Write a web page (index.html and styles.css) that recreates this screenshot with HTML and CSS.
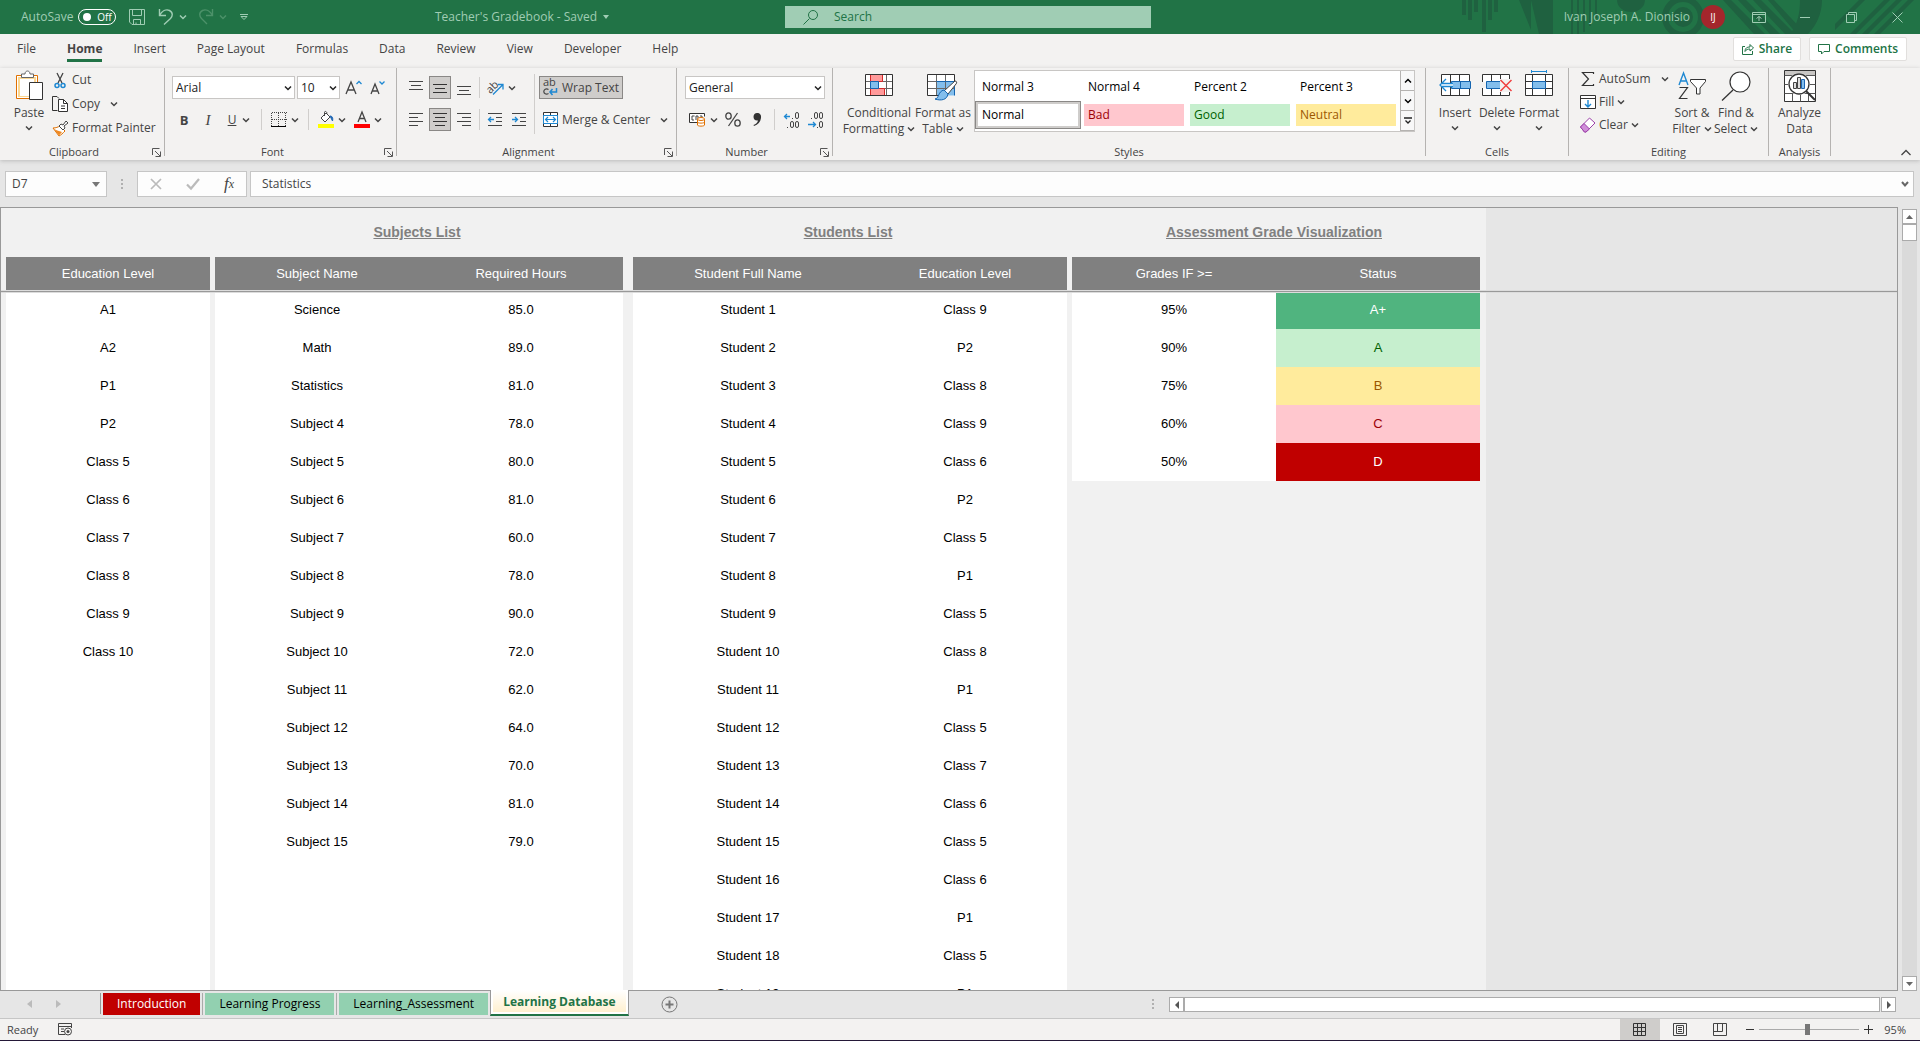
FILE: index.html
```html
<!DOCTYPE html>
<html lang="en">
<head>
  <meta charset="UTF-8">
  <meta name="viewport" content="width=device-width, initial-scale=1.0">
  <title>Teacher's Gradebook</title>
  <link rel="stylesheet" href="styles.css">
</head>
<body>
  <!-- shared icons -->
  <svg class="sprite" aria-hidden="true">
    <symbol id="chev" viewBox="0 0 8 8"><path d="M1 2.5 4 5.5 7 2.5" fill="none" stroke="currentColor" stroke-width="1.5"/></symbol>
    <symbol id="chev-up" viewBox="0 0 8 8"><path d="M1 5.5 4 2.5 7 5.5" fill="none" stroke="currentColor" stroke-width="1.5"/></symbol>
    <symbol id="launcher" viewBox="0 0 9 9"><path d="M.5 7V.5H7.500M3 3 8 8M8.500 3.500V8.500H3.500" fill="none" stroke="#555"/></symbol>
  </svg>

  <header class="titlebar">
    <svg class="deco" viewBox="0 0 460 34" aria-hidden="true">
      <g fill="#1f6140">
        <path d="M2 0h4v15H2zM8 0h4v20H8zM14 0h4v12h-4zM22 0h4v32h-4zM28 0h4v20h-4zM34 0h4v12h-4zM59 0h12v30L59 0zM71 0h22v34H79zM111 0h2v34h-2zM117 0h2v34h-2zM123 0h2v32h-2zM129 0h2v26h-2zM135 0h2v18h-2z"/>
        <path d="M157 0h28a14 12 0 0 1-28 0z"/>
        <path d="M263 0h8l34 34h-11zM278 0h8l34 34h-10zM293 0h8l34 34h-10zM308 0h6l32 34h-9zM340 0h22c0 14-6 26-14 34h-18c8-10 10-22 10-34zM390 34l34-34h6l-34 34zM402 34l34-34h6l-34 34zM414 34l34-34h6l-34 34zM375 24l24-24h6l-30 30z"/>
      </g>
      <g fill="none" stroke="#1f6140" stroke-width="6"><circle cx="223" cy="17" r="18"/><circle cx="223" cy="17" r="7"/></g>
    </svg>
    <div class="quick">
      <span>AutoSave</span>
      <button class="autosave" role="switch" aria-checked="false" aria-label="AutoSave"><i></i>Off</button>
      <button class="tb save" aria-label="Save"><svg width="16" height="16" viewBox="0 0 16 16"><path d="M.5.5h15v15H3L.5 13zM3.500.5v6h9v-6M4.500 15.500v-5h7v5M7 15.500v-2" fill="none" stroke="currentColor"/></svg></button>
      <button class="tb" aria-label="Undo"><svg width="16" height="18" viewBox="0 0 16 18"><path d="M1.500 1v6.500H8M1.500 7.500C4 3 8 1 11.500 2.500c4 2 3 6 1 8L6 16.500" fill="none" stroke="currentColor" stroke-width="1.400"/></svg></button>
      <button class="tb arrow" aria-label="Undo list"><svg width="8" height="8"><use href="#chev"/></svg></button>
      <button class="tb dim" aria-label="Redo"><svg width="16" height="18" viewBox="0 0 16 18"><path d="M14.500 1v6.500H8M14.500 7.500C12 3 8 1 4.500 2.500c-4 2-3 6-1 8L9 16" fill="none" stroke="currentColor" stroke-width="1.400"/></svg></button>
      <button class="tb arrow dim" aria-label="Redo list"><svg width="8" height="8"><use href="#chev"/></svg></button>
      <button class="tb custom" aria-label="Customize toolbar"><svg width="8" height="8" viewBox="0 0 8 8"><path d="M0 1.500h8M1 3.500l3 3 3-3z" fill="none" stroke="currentColor"/></svg></button>
    </div>
    <button class="docname">Teacher's Gradebook - Saved <svg width="6" height="4" viewBox="0 0 6 4"><path d="M0 0h6L3 4z" fill="currentColor"/></svg></button>
    <label class="search">
      <svg width="16" height="16" viewBox="0 0 16 16"><circle cx="10" cy="6" r="4.500" fill="none" stroke="#217346"/><path d="M6.500 9.500.5 15.500" stroke="#217346"/></svg>
      <input type="text" placeholder="Search" aria-label="Search">
    </label>
    <div class="account">
      <span>Ivan Joseph A. Dionisio</span>
      <button class="avatar">IJ</button>
      <button class="win" aria-label="Ribbon display options"><svg width="14" height="11" viewBox="0 0 14 11"><path d="M.5.5h13v10H.5zM.5 2.500h13M7 9V4.500M4.500 6.500 7 4.500l2.500 2" fill="none" stroke="currentColor"/></svg></button>
      <button class="win" aria-label="Minimize"><svg width="10" height="11"><path d="M0 5.500h10" stroke="currentColor"/></svg></button>
      <button class="win" aria-label="Restore"><svg width="11" height="11" viewBox="0 0 11 11"><path d="M.5 2.500h8v8h-8zM2.500 2.500v-2h8v8h-2" fill="none" stroke="currentColor"/></svg></button>
      <button class="win" aria-label="Close"><svg width="11" height="11" viewBox="0 0 11 11"><path d="M.5.5l10 10M10.500.5l-10 10" stroke="currentColor"/></svg></button>
    </div>
  </header>

  <nav class="tabs">
    <a href="#file">File</a>
    <a href="#home" class="active">Home</a>
    <a href="#insert">Insert</a>
    <a href="#layout">Page Layout</a>
    <a href="#formulas">Formulas</a>
    <a href="#data">Data</a>
    <a href="#review">Review</a>
    <a href="#view">View</a>
    <a href="#developer">Developer</a>
    <a href="#help">Help</a>
    <div class="share">
      <button><svg width="12" height="12" viewBox="0 0 12 12"><path d="M3 3.500H.5v8h10V8M3 8.500C3 5 5 4 8 4V1.500L11.500 5 8 8V6C6 6 4 6.500 3 8.500z" fill="none" stroke="currentColor"/></svg>Share</button>
      <button><svg width="12" height="12" viewBox="0 0 12 12"><path d="M.5 1.500h11v7H6L3.500 11V8.500h-3z" fill="none" stroke="currentColor"/></svg>Comments</button>
    </div>
  </nav>

  <div class="ribbon">
    <section class="group clipboard">
      <div class="tools">
        <button class="big">
          <svg width="30" height="32" viewBox="0 0 30 32"><path d="M2.500 5.500h21v23h-21z" fill="#fff" stroke="#e07000"/><path d="M4 7h18v20H4z" fill="#fbd894"/><path d="M6 9h14v17H6z" fill="#fff"/><path d="M7.500 7.500V4H11c0-4 5-4 5 0h3.500v3.500z" fill="#fff" stroke="#666"/><path d="M15.500 12.500h13v17h-13z" fill="#fff" stroke="#333"/></svg>
          <span>Paste</span><svg class="c" width="8" height="8"><use href="#chev"/></svg>
        </button>
        <div class="stack">
          <button><svg width="17" height="17" viewBox="0 0 17 17"><path d="M5 1l5 10M11 1 6 11" stroke="#444" stroke-width="1.300"/><circle cx="5" cy="13.500" r="2" fill="none" stroke="#1e88d2" stroke-width="1.500"/><circle cx="11" cy="13.500" r="2" fill="none" stroke="#1e88d2" stroke-width="1.500"/></svg>Cut</button>
          <button><svg width="17" height="17" viewBox="0 0 17 17"><path d="M5.500 14.500h-5V.5h4.500l2 2" fill="none" stroke="#333"/><path d="M6.500 3.500h5l4 4v8h-9z" fill="#fff" stroke="#333"/><path d="M11.500 3.500v4h4M9 10h4M9 12.500h4" fill="none" stroke="#333"/></svg>Copy<svg class="c gap" width="8" height="8"><use href="#chev"/></svg></button>
          <button><svg width="17" height="17" viewBox="0 0 17 17"><path d="M1 8c3 0 5-1 7-2l5 5c-2 2-4 4-6 5z" fill="#fff" stroke="#e07000"/><path d="M2 9c4 2 6 2 8 3l-3 3.500z" fill="#f08a24"/><path d="M7 6l2-2 2 1 3-4 2 2-4 3 1 2-2 2z" fill="#fff" stroke="#444"/></svg>Format Painter</button>
        </div>
      </div>
      <footer>Clipboard<button aria-label="Clipboard options"><svg width="9" height="9"><use href="#launcher"/></svg></button></footer>
    </section>

    <section class="group font">
      <div class="tools rows">
        <div class="row">
          <select class="face" aria-label="Font"><option>Arial</option></select>
          <select class="size" aria-label="Font size"><option>10</option></select>
          <button class="ic" aria-label="Increase font size"><svg width="18" height="16" viewBox="0 0 18 16"><path d="M1 14 6 2l5 12M3 10h6" fill="none" stroke="#444" stroke-width="1.300"/><path d="M11.500 4 14 1.500 16.500 4" fill="none" stroke="#1e88d2" stroke-width="1.300"/></svg></button>
          <button class="ic" aria-label="Decrease font size"><svg width="16" height="16" viewBox="0 0 16 16"><path d="M1 14 5 4l4 10M2.500 11h5" fill="none" stroke="#444" stroke-width="1.300"/><path d="M9.500 1.500 12 4l2.500-2.500" fill="none" stroke="#1e88d2" stroke-width="1.300"/></svg></button>
        </div>
        <div class="row">
          <button class="ic b">B</button><button class="ic i">I</button>
          <button class="ic dd"><span class="u">U</span><svg class="c" width="8" height="8"><use href="#chev"/></svg></button>
          <span class="sep"></span>
          <button class="ic dd" aria-label="Borders"><svg width="16" height="16" viewBox="0 0 16 16"><path d="M1 .5h15M1 7.500h15M.5 1v14M7.500 1v14M14.500 1v14" stroke="#444" stroke-dasharray="1 1"/><path d="M0 14.500h15" stroke="#000"/></svg><svg class="c" width="8" height="8"><use href="#chev"/></svg></button>
          <span class="sep"></span>
          <button class="ic dd" aria-label="Fill color"><svg width="16" height="17" viewBox="0 0 16 17"><path d="M8 2 3 7l4 4 5-5zM6.500 5V1.500c0-2 2.500-1 2.500 1" fill="#fff" stroke="#444"/><path d="M12 5c3 0 3 3 2.500 5L13 7z" fill="#1e66b4" stroke="#1e66b4"/><path d="M0 13h16v4H0z" fill="#ff0"/></svg><svg class="c" width="8" height="8"><use href="#chev"/></svg></button>
          <button class="ic dd" aria-label="Font color"><svg width="16" height="17" viewBox="0 0 16 17"><path d="M4 11 8 1l4 10M5.500 7.500h5" fill="none" stroke="#444" stroke-width="1.300"/><path d="M0 13h16v4H0z" fill="#f00"/></svg><svg class="c" width="8" height="8"><use href="#chev"/></svg></button>
        </div>
      </div>
      <footer>Font<button aria-label="Font options"><svg width="9" height="9"><use href="#launcher"/></svg></button></footer>
    </section>

    <section class="group alignment">
      <div class="tools">
        <div class="rows">
          <div class="row">
            <button class="ic" aria-label="Top align"><svg width="14" height="14" viewBox="0 0 14 14"><path d="M0 .5h14M2 4.500h10M0 8.500h14" stroke="#444"/></svg></button>
            <button class="ic on" aria-label="Middle align"><svg width="14" height="14" viewBox="0 0 14 14"><path d="M0 3.500h14M2 7.500h10M0 11.500h14" stroke="#333"/></svg></button>
            <button class="ic" aria-label="Bottom align"><svg width="14" height="14" viewBox="0 0 14 14"><path d="M0 5.500h14M2 9.500h10M0 13.500h14" stroke="#444"/></svg></button>
            <span class="sep"></span>
            <button class="ic dd" aria-label="Orientation"><svg width="17" height="17" viewBox="0 0 17 17"><text x="-1" y="13" font-size="11" fill="#444" transform="rotate(-45 4 9)">ab</text><path d="M6 15.500 15.500 6M11 5.500h5v5" fill="none" stroke="#1e88d2" stroke-width="1.300"/></svg><svg class="c" width="8" height="8"><use href="#chev"/></svg></button>
          </div>
          <div class="row">
            <button class="ic" aria-label="Align left"><svg width="14" height="14" viewBox="0 0 14 14"><path d="M0 .5h14M0 4.500h9M0 8.500h14M0 12.500h9" stroke="#444"/></svg></button>
            <button class="ic on" aria-label="Center"><svg width="14" height="14" viewBox="0 0 14 14"><path d="M0 .5h14M2 4.500h10M0 8.500h14M2 12.500h10" stroke="#333"/></svg></button>
            <button class="ic" aria-label="Align right"><svg width="14" height="14" viewBox="0 0 14 14"><path d="M0 .5h14M5 4.500h9M0 8.500h14M5 12.500h9" stroke="#444"/></svg></button>
            <span class="sep"></span>
            <button class="ic" aria-label="Decrease indent"><svg width="14" height="14" viewBox="0 0 14 14"><path d="M0 .5h14M8 4.500h6M8 8.500h6M0 12.500h14" stroke="#444"/><path d="M6 6.500H.5M3 4 .5 6.500 3 9" fill="none" stroke="#1e88d2" stroke-width="1.300"/></svg></button>
            <button class="ic" aria-label="Increase indent"><svg width="14" height="14" viewBox="0 0 14 14"><path d="M0 .5h14M8 4.500h6M8 8.500h6M0 12.500h14" stroke="#444"/><path d="M0 6.500h5.500M3 4l2.500 2.500L3 9" fill="none" stroke="#1e88d2" stroke-width="1.300"/></svg></button>
          </div>
        </div>
        <span class="sep tall"></span>
        <div class="rows">
          <div class="row"><button class="txt on"><svg width="16" height="17" viewBox="0 0 16 17"><text x="0" y="7" font-size="11" fill="#444">ab</text><path d="M5.500 10.500C3 9 .8 10.500.8 12.500S3 16 5.500 14.500" fill="none" stroke="#444" stroke-width="1.200"/><path d="M13.500 9v4H7M9.500 10 7 13l2.500 3" fill="none" stroke="#1e88d2" stroke-width="1.500"/></svg>Wrap Text</button></div>
          <div class="row"><button class="txt"><svg width="16" height="16" viewBox="0 0 16 16"><path d="M.5.5h14v14H.5zM.5 3.500h14M.5 11.500h14M7.500.5v3M7.500 11.500v3" fill="#fff" stroke="#333"/><path d="M.5 3.500h14v8H.5z" fill="#fff" stroke="#1e88d2"/><path d="M2.500 7.500h10M5 5 2.500 7.500 5 10M10 5l2.500 2.500L10 10" fill="none" stroke="#1e88d2" stroke-width="1.200"/></svg>Merge &amp; Center<svg class="c gap" width="8" height="8"><use href="#chev"/></svg></button></div>
        </div>
      </div>
      <footer>Alignment<button aria-label="Alignment options"><svg width="9" height="9"><use href="#launcher"/></svg></button></footer>
    </section>

    <section class="group number">
      <div class="tools rows">
        <div class="row"><select class="format" aria-label="Number format"><option>General</option></select></div>
        <div class="row">
          <button class="ic dd" aria-label="Accounting format"><svg width="17" height="15" viewBox="0 0 17 15"><path d="M8 10.500H.5v-9h15v3" fill="#fff" stroke="#333"/><path d="M5.500 4H3v4h2M9 8V4H7v4M11 4h2v2" fill="none" stroke="#444"/><path d="M8.500 7v6c0 1.500 7 1.500 7 0V7" fill="#fff" stroke="#e07000"/><ellipse cx="12" cy="7" rx="3.500" ry="1.500" fill="#fff" stroke="#e07000"/><path d="M8.500 10c0 1.500 7 1.500 7 0" fill="none" stroke="#e07000"/></svg><svg class="c" width="8" height="8"><use href="#chev"/></svg></button>
          <button class="ic" aria-label="Percent"><svg width="16" height="15" viewBox="0 0 16 15"><path d="M12.500 1 3.500 14" stroke="#444" stroke-width="1.300"/><ellipse cx="3.500" cy="4" rx="2.700" ry="3.200" fill="none" stroke="#444" stroke-width="1.300"/><ellipse cx="12.500" cy="11" rx="2.700" ry="3.200" fill="none" stroke="#444" stroke-width="1.300"/></svg></button>
          <button class="ic" aria-label="Comma style"><svg width="9" height="13" viewBox="0 0 9 13"><path d="M4 0c3 0 4.500 2 4 5-.5 4-3 6.500-7 8l-.5-1c2.500-1 4-2.500 4.500-4.500C2 8 .5 6 .5 3.800.5 1.500 2 0 4 0z" fill="#333"/></svg></button>
          <span class="sep"></span>
          <button class="ic" aria-label="Increase decimal"><svg width="16" height="16" viewBox="0 0 16 16"><path d="M6 4.500H.5M3 2 .5 4.500 3 7" fill="none" stroke="#1e88d2" stroke-width="1.300"/><g fill="none" stroke="#444"><rect x="11.500" y=".5" width="3" height="6" rx="1.500"/><rect x="6.500" y="9.500" width="3" height="6" rx="1.500"/><rect x="11.500" y="9.500" width="3" height="6" rx="1.500"/></g><path d="M8 6h1v1H8zM3 15h1v1H3z" fill="#444"/></svg></button>
          <button class="ic" aria-label="Decrease decimal"><svg width="16" height="16" viewBox="0 0 16 16"><path d="M0 12.500h7.500M5 10l2.500 2.500L5 15" fill="none" stroke="#1e88d2" stroke-width="1.300"/><g fill="none" stroke="#444"><rect x="6.500" y=".5" width="3" height="6" rx="1.500"/><rect x="11.500" y=".5" width="3" height="6" rx="1.500"/><rect x="11.500" y="9.500" width="3" height="6" rx="1.500"/></g><path d="M3 6h1v1H3zM9 15h1v1H9z" fill="#444"/></svg></button>
        </div>
      </div>
      <footer>Number<button aria-label="Number options"><svg width="9" height="9"><use href="#launcher"/></svg></button></footer>
    </section>

    <section class="group styles">
      <div class="tools">
        <button class="big cond">
          <svg width="28" height="32" viewBox="0 0 28 32"><g transform="translate(0 4)"><path d="M.5.5h27v21H.5z" fill="#fff"/><path d="M.5 7.500h27M.5 14.500h27M5.500.5v21M21.500.5v21" stroke="#666"/><path d="M5.500.5h12v7h-12zM5.500 14.500h14v7h-14z" fill="#ff9a9a" stroke="#d42a2a"/><path d="M5.500 7.500h8v7h-8z" fill="#83beec" stroke="#1565b0"/><path d="M.5.5h27v21H.5z" fill="none" stroke="#333"/></g></svg>
          <span>Conditional<br>Formatting <svg class="c" width="8" height="8"><use href="#chev"/></svg></span>
        </button>
        <button class="big table">
          <svg width="32" height="32" viewBox="0 0 32 32"><g transform="translate(0 4)"><path d="M.5.5h27v21H.5z" fill="#fff"/><path d="M9.500 7.500h18v14h-18z" fill="#83beec"/><path d="M.5 7.500h27M.5 14.500h27M9.500.5v21M18.500.5v21" stroke="#666"/><path d="M27.500 12V.5H.5v21H12" fill="none" stroke="#333"/><path d="M9.500 7.500h18v14" fill="none" stroke="#1565b0"/><path d="M28 7c2 0 2 2 1 3l-8 10-4-3z" fill="#fff" stroke="#444"/><path d="M17 16l4 4c-1 6-7 7-13 5 4 0 3-8 9-9z" fill="#83beec" stroke="#1565b0"/></g></svg>
          <span>Format as<br>Table <svg class="c" width="8" height="8"><use href="#chev"/></svg></span>
        </button>
        <div class="gallery">
          <div class="swatches">
            <button>Normal 3</button><button>Normal 4</button><button>Percent 2</button><button>Percent 3</button>
            <button class="picked">Normal</button><button class="bad">Bad</button><button class="good">Good</button><button class="neutral">Neutral</button>
          </div>
          <div class="scroller">
            <button aria-label="Previous styles"><svg width="8" height="8"><use href="#chev-up"/></svg></button>
            <button aria-label="Next styles"><svg width="8" height="8"><use href="#chev"/></svg></button>
            <button aria-label="More styles"><svg width="8" height="8" viewBox="0 0 8 8"><path d="M0 1h8M1.500 3.500 4 6l2.500-2.500" fill="none" stroke="#222" stroke-width="1.300"/></svg></button>
          </div>
        </div>
      </div>
      <footer>Styles</footer>
    </section>

    <section class="group cells">
      <div class="tools">
        <button class="big"><svg width="32" height="32" viewBox="0 0 32 32"><g transform="translate(0 4)"><path d="M2.500.5h28v21h-28zM11.500.5v21M20.500.5v21" fill="#fff" stroke="#333"/><path d="M12.500 7.500h19v7h-19z" fill="#83beec" stroke="#1565b0"/><path d="M21.500 7.500v7" stroke="#1565b0"/><path d="M.5 11 7 5v4h7v4H7v4z" fill="#fff"/><path d="M14 9.500H3M14 12.500H3M7 5 1 11l6 6" fill="none" stroke="#1e88d2" stroke-width="1.300"/></g></svg><span>Insert</span><svg class="c" width="8" height="8"><use href="#chev"/></svg></button>
        <button class="big"><svg width="30" height="32" viewBox="0 0 30 32"><g transform="translate(0 4)"><path d="M.5.5h27v21H.5zM9.500.5v21M18.500.5v21" fill="#fff" stroke="#333"/><path d="M0 8h5v6H0z" fill="#f3f2f1"/><path d="M4.500 7.500h14l3 3.500-3 3.500h-14z" fill="#83beec" stroke="#1565b0"/><path d="M18 5h12v13H18z" fill="#f3f2f1"/><path d="M18.500 6l11 11M29.500 6l-11 11" stroke="#f04040" stroke-width="1.500"/></g></svg><span>Delete</span><svg class="c" width="8" height="8"><use href="#chev"/></svg></button>
        <button class="big"><svg width="28" height="32" viewBox="0 0 28 32"><g transform="translate(0 4)"><path d="M.5.5h27v21H.5zM.5 7.500h27M.5 14.500h27M7.500.5v21M20.500.5v21" fill="#fff" stroke="#333"/><path d="M7.500 7.500h13v7h-13z" fill="#83beec" stroke="#1565b0"/><path d="M6.500-4v3M21.500-4v3M6.500-2.500h15" stroke="#1e88d2"/></g></svg><span>Format</span><svg class="c" width="8" height="8"><use href="#chev"/></svg></button>
      </div>
      <footer>Cells</footer>
    </section>

    <section class="group editing">
      <div class="tools">
        <div class="stack">
          <button><svg width="16" height="16" viewBox="0 0 16 16"><path d="M13.500 3V1.500H2.500L8.500 8l-6 6.500h11V13" fill="none" stroke="#333" stroke-width="1.200"/></svg>AutoSum<svg class="c gap" width="8" height="8"><use href="#chev"/></svg></button>
          <button><svg width="16" height="15" viewBox="0 0 16 15"><path d="M.5.5h15v13H.5zM.5 3.500h15" fill="#fff" stroke="#333"/><path d="M8 5v7M5 9l3 3 3-3" fill="none" stroke="#1e88d2" stroke-width="1.400"/></svg>Fill<svg class="c" width="8" height="8"><use href="#chev"/></svg></button>
          <button><svg width="16" height="16" viewBox="0 0 16 16"><path d="M.5 10 9.500 1l5.500 5-9 9H4.500z" fill="#fff" stroke="#9b3fa8"/><path d="M.5 10 4 6.500l5.500 5.500L6 15H4.500z" fill="#cf8ed8" stroke="#9b3fa8"/></svg>Clear<svg class="c" width="8" height="8"><use href="#chev"/></svg></button>
        </div>
        <button class="big"><svg width="30" height="32" viewBox="0 0 30 32"><path d="M2 15 6.500 3 11 15M3.500 11h6" fill="none" stroke="#1e88d2" stroke-width="1.400"/><path d="M2.500 17.500h8l-8 11h8" fill="none" stroke="#333" stroke-width="1.200"/><path d="M13.500 9.500h15v2L23 18v6h-3.500v-6l-6-6.500z" fill="#fff" stroke="#333"/></svg><span>Sort &amp;<br>Filter <svg class="c" width="8" height="8"><use href="#chev"/></svg></span></button>
        <button class="big"><svg width="32" height="32" viewBox="0 0 32 32"><circle cx="20" cy="12" r="10" fill="#fff" stroke="#333" stroke-width="1.200"/><path d="M13 20 2 30.500" stroke="#333" stroke-width="1.300"/></svg><span>Find &amp;<br>Select <svg class="c" width="8" height="8"><use href="#chev"/></svg></span></button>
      </div>
      <footer>Editing</footer>
    </section>

    <section class="group analysis">
      <div class="tools">
        <button class="big"><svg width="32" height="32" viewBox="0 0 32 32"><path d="M.5.5h31v31H.5z" fill="#fff" stroke="#333"/><path d="M1 1h30v4H1z" fill="#c8c6c4"/><path d="M.5 5.500h31M.5 14.500h31M.5 23.500h31M8.500 23.500v8M16.500 23.500v8M24.500 23.500v8" stroke="#555"/><circle cx="15" cy="14" r="11" fill="#fff"/><circle cx="15" cy="14" r="10" fill="#fff" stroke="#333" stroke-width="1.300"/><path d="M9.500 12.500h3v6h-3zM13.500 7.500h3v11h-3z" fill="#ddd" stroke="#444"/><path d="M17.500 9.500h3v9h-3z" fill="#83beec" stroke="#1e66b4"/><path d="M22 21l9 9" stroke="#333" stroke-width="2"/></svg><span>Analyze<br>Data</span></button>
      </div>
      <footer>Analysis</footer>
    </section>
    <button class="collapse" aria-label="Collapse ribbon"><svg width="10" height="7" viewBox="0 0 10 7"><path d="M.5 6 5 1.500 9.500 6" fill="none" stroke="#444" stroke-width="1.300"/></svg></button>
  </div>

  <div class="formulabar">
    <div class="namebox"><input type="text" value="D7" aria-label="Name box"><button aria-label="Names"><svg width="8" height="5" viewBox="0 0 8 5"><path d="M0 0h8L4 5z" fill="#777"/></svg></button></div>
    <span class="dots"></span>
    <div class="fxbox">
      <button aria-label="Cancel"><svg width="12" height="12" viewBox="0 0 12 12"><path d="M1 1l10 10M11 1 1 11" stroke="#bbb" stroke-width="1.700"/></svg></button>
      <button aria-label="Enter"><svg width="14" height="12" viewBox="0 0 14 12"><path d="M1 6.500 5 10.500 13 1" fill="none" stroke="#bbb" stroke-width="2.200"/></svg></button>
      <button aria-label="Insert function" class="fx">f<sub>x</sub></button>
    </div>
    <div class="formula"><input type="text" value="Statistics" aria-label="Formula"><button aria-label="Expand formula bar"><svg width="8" height="8" viewBox="0 0 8 8"><path d="M1 2 4 5.500 7 2" fill="none" stroke="#666" stroke-width="2"/></svg></button></div>
  </div>

  <div class="workbook">
    <main class="sheet">
      <div class="lists">
        <table class="levels"><caption></caption><thead><tr><th>Education Level</th></tr></thead><tbody></tbody></table>
        <table class="subjects"><caption>Subjects List</caption><thead><tr><th>Subject Name</th><th>Required Hours</th></tr></thead><tbody></tbody></table>
        <table class="students"><caption>Students List</caption><thead><tr><th class="fullname">Student Full Name</th><th>Education Level</th></tr></thead><tbody></tbody></table>
        <table class="grades"><caption>Assessment Grade Visualization</caption><thead><tr><th>Grades IF &gt;=</th><th>Status</th></tr></thead>
          <tbody>
            <tr><td>95%</td><td class="a-plus">A+</td></tr>
            <tr><td>90%</td><td class="good">A</td></tr>
            <tr><td>75%</td><td class="neutral">B</td></tr>
            <tr><td>60%</td><td class="bad">C</td></tr>
            <tr><td>50%</td><td class="fail">D</td></tr>
          </tbody>
        </table>
      </div>
      <div class="freeze"></div>
    </main>
    <div class="vscroll">
      <button aria-label="Scroll up"><svg width="7" height="4" viewBox="0 0 7 4"><path d="M0 4h7L3.500 0z" fill="#666"/></svg></button>
      <i></i>
      <button aria-label="Scroll down"><svg width="7" height="4" viewBox="0 0 7 4"><path d="M0 0h7L3.500 4z" fill="#666"/></svg></button>
    </div>
  </div>

  <div class="sheettabs">
    <div class="arrows">
      <button aria-label="Previous sheet"><svg width="5" height="8" viewBox="0 0 5 8"><path d="M5 0v8L0 4z" fill="#bbb"/></svg></button>
      <button aria-label="Next sheet"><svg width="5" height="8" viewBox="0 0 5 8"><path d="M0 0v8l5-4z" fill="#bbb"/></svg></button>
    </div>
    <a href="#intro" class="red">Introduction</a>
    <a href="#progress">Learning Progress</a>
    <a href="#assessment">Learning_Assessment</a>
    <a href="#database" class="current"><span>Learning Database</span></a>
    <button class="add" aria-label="New sheet"><svg width="17" height="17" viewBox="0 0 17 17"><circle cx="8.500" cy="8.500" r="7.500" fill="none" stroke="#777"/><path d="M8.500 4.500v8M4.500 8.500h8" stroke="#777" stroke-width="2"/></svg></button>
    <div class="hscroll">
      <span class="dots"></span>
      <button aria-label="Scroll left"><svg width="4" height="8" viewBox="0 0 4 8"><path d="M4 0v8L0 4z" fill="#555"/></svg></button>
      <i></i>
      <button class="right" aria-label="Scroll right"><svg width="4" height="8" viewBox="0 0 4 8"><path d="M0 0v8l4-4z" fill="#555"/></svg></button>
    </div>
  </div>

  <footer class="status">
    <span>Ready</span>
    <button class="macro" aria-label="Record macro"><svg width="15" height="13" viewBox="0 0 15 13"><path d="M7 11.500H.5V.5h13V5M.5 3.500h13M3 6h3M3 8.500h3" fill="none" stroke="#444"/><circle cx="10" cy="8.500" r="3.500" fill="#f3f2f1" stroke="#444"/><circle cx="10" cy="8.500" r="1.500" fill="#444"/></svg></button>
    <div class="views">
      <button class="on" aria-label="Normal view"><svg width="14" height="14" viewBox="0 0 14 14"><path d="M.5.5h12v12H.5zM.5 4.500h12M.5 8.500h12M4.500.5v12M8.500.5v12" fill="none" stroke="#333"/></svg></button>
      <button aria-label="Page layout view"><svg width="14" height="14" viewBox="0 0 14 14"><path d="M.5.5h13v12H.5zM3.500 2.500h7v8h-7zM5 4.500h4M5 6.500h4M5 8.500h4" fill="none" stroke="#444"/></svg></button>
      <button aria-label="Page break view"><svg width="14" height="14" viewBox="0 0 14 14"><path d="M.5.5h13v12H.5zM.5 8.500h9v-8M4.500.5v8" fill="none" stroke="#444"/></svg></button>
    </div>
    <button class="zoom" aria-label="Zoom out"><svg width="8" height="9"><path d="M0 4.500h8" stroke="#333"/></svg></button>
    <input type="range" min="10" max="180" value="92" aria-label="Zoom">
    <button class="zoom" aria-label="Zoom in"><svg width="9" height="9"><path d="M0 4.500h9M4.500 0v9" stroke="#333"/></svg></button>
    <span class="percent">95%</span>
  </footer>

  <script>
  const ROWS = 19;
  const levels = ["A1", "A2", "P1", "P2", "Class 5", "Class 6", "Class 7", "Class 8", "Class 9", "Class 10"];
  const names = ["Science", "Math", "Statistics"];
  const hours = ["85.0", "89.0", "81.0", "78.0", "80.0", "81.0", "60.0", "78.0", "90.0", "72.0", "62.0", "64.0", "70.0", "81.0", "79.0"];
  const classes = ["Class 9", "P2", "Class 8", "Class 9", "Class 6", "P2", "Class 5", "P1", "Class 5", "Class 8",
    "P1", "Class 5", "Class 7", "Class 6", "Class 5", "Class 6", "P1", "Class 5", "P1"];

  // pad every list with blank cells to the bottom of the sheet
  function fillTable(selector, rows, columns) {
    const body = document.querySelector(selector + " tbody");
    for (let i = 0; i < ROWS; i++) {
      const row = body.insertRow();
      for (let j = 0; j < columns; j++) {
        row.insertCell().textContent = rows[i] ? rows[i][j] : "";
      }
    }
  }

  fillTable(".levels", levels.map(l => [l]), 1);
  fillTable(".subjects", hours.map((h, i) => [names[i] || `Subject ${i + 1}`, h]), 2);
  fillTable(".students", classes.map((c, i) => [`Student ${i + 1}`, c]), 2);
  </script>
</body>
</html>
```
FILE: styles.css
```css
*{
  box-sizing: border-box;
}
body{
  margin: 0;
  height: 100vh;
  display: flex;
  flex-direction: column;
  overflow: hidden;
  background: #e6e6e6;
  color: #444;
  font: 12px/16px "Open Sans", "Segoe UI", sans-serif;
}
button, input, select{
  font: inherit;
  color: inherit;
  border: 0;
  padding: 0;
  margin: 0;
  background: none;
}
button{
  display: flex;
  align-items: center;
  justify-content: center;
  flex: none;
  white-space: nowrap;
}
a{
  color: inherit;
  text-decoration: none;
}
svg{
  flex: none;
  overflow: visible;
}
.sprite{
  position: absolute;
  width: 0;
  height: 0;
}

/* title bar */
.titlebar{
  position: relative;
  height: 34px;
  flex: none;
  display: grid;
  grid-template-columns: 435px 350px 10fr 21fr;
  align-items: center;
  background: #217346;
  color: #a0cdb4;
}
.deco{
  position: absolute;
  right: 0;
  top: 0;
  width: 460px;
  height: 34px;
  overflow: hidden;
}
.quick, .account{
  position: relative;
  display: flex;
  align-items: center;
}
.quick{
  padding-left: 21px;
}
.autosave{
  width: 38px;
  height: 16px;
  margin-left: 5px;
  border: 1px solid #fff;
  border-radius: 8px;
  color: #fff;
  font-size: 10px;
  gap: 6px;
}
.autosave i{
  width: 8px;
  height: 8px;
  border-radius: 50%;
  background: #fff;
}
.tb{
  width: 26px;
  height: 24px;
}
.tb.save{
  margin: 0 3px 0 8px;
}
.tb.arrow{
  width: 14px;
  margin: 0 3px 0 -3px;
}
.tb.custom{
  width: 22px;
}
.dim{
  color: #4c9169;
}
.docname{
  justify-content: flex-start;
  gap: 6px;
}
.search{
  height: 22px;
  padding-left: 18px;
  display: flex;
  align-items: center;
  gap: 15px;
  background: #a0cdb4;
}
.search input{
  flex: 1;
  min-width: 0;
}
.search input::placeholder{
  color: #217346;
}
.account{
  justify-content: flex-end;
}
.avatar{
  width: 24px;
  height: 24px;
  margin: 0 11px;
  border-radius: 50%;
  background: #a4262c;
  color: #fff;
  font-size: 10px;
}
.win{
  width: 46px;
  height: 24px;
}

/* ribbon tabs */
.tabs{
  height: 34px;
  flex: none;
  padding: 0 13px 0 17px;
  display: flex;
  align-items: flex-start;
  gap: 31px;
  background: #f3f2f1;
}
.tabs a{
  height: 28px;
  padding-top: 7px;
}
.tabs .active{
  font-weight: 700;
  border-bottom: 3px solid #217346;
}
.share{
  margin: 3px 0 0 auto;
  display: flex;
  gap: 8px;
}
.share button{
  height: 24px;
  padding: 0 8px;
  gap: 5px;
  background: #fff;
  border: 1px solid #e1dfdd;
  border-radius: 2px;
  color: #217346;
  font-weight: 600;
}

/* ribbon */
.ribbon{
  position: relative;
  z-index: 1;
  height: 92px;
  flex: none;
  padding-bottom: 4px;
  display: flex;
  background: #f3f2f1;
  box-shadow: 0 1px 4px #bbb;
}
.group{
  display: flex;
  flex-direction: column;
  border-right: 1px solid #b5b3b1;
}
.group footer{
  position: relative;
  height: 16px;
  margin-bottom: -4px;
  text-align: center;
  font-size: 11px;
  padding-right: 16px;
}
.group footer button{
  position: absolute;
  right: 3px;
  top: 4px;
}
.styles footer, .cells footer, .editing footer, .analysis footer{
  padding: 0;
}
.tools{
  flex: 1;
  display: flex;
}
.clipboard{
  width: 165px;
}
.font{
  width: 232px;
}
.alignment{
  width: 280px;
}
.number{
  width: 156px;
}
.styles{
  width: 593px;
}
.cells{
  width: 143px;
}
.editing{
  width: 200px;
}
.analysis{
  width: 62px;
}
.big{
  flex-direction: column;
  justify-content: flex-start;
  padding-top: 2px;
  gap: 3px;
}
.c{
  color: #444;
}
.c.gap{
  margin-left: 7px;
}
.stack{
  display: flex;
  flex-direction: column;
  gap: 8px;
  padding-top: 4px;
}
.stack button{
  height: 16px;
  gap: 3px;
  justify-content: flex-start;
}
.clipboard .big{
  width: 38px;
  margin-left: 10px;
}
.clipboard .stack{
  margin-left: 4px;
}
.rows{
  display: flex;
  flex-direction: column;
  gap: 9px;
  padding-top: 8px;
}
.row{
  height: 23px;
  display: flex;
  align-items: center;
}
.ic{
  width: 24px;
  height: 23px;
}
.ic.dd{
  width: 36px;
  gap: 4px;
}
.b{
  font-weight: 700;
  font-size: 13px;
}
.i{
  font-style: italic;
  font-family: "Liberation Serif", serif;
  font-size: 15px;
}
.u{
  width: 12px;
  text-decoration: underline;
}
.on{
  background: #cfcdcb;
  border: 1px solid #8a8886;
}
.sep{
  width: 1px;
  height: 21px;
  margin: 0 5px;
  background: #d0cecc;
}
.alignment .sep{
  margin: 0 3px;
}
.alignment .tall{
  height: 60px;
  margin: 6px 4px 0 3px;
}
select{
  height: 23px;
  padding: 0 3px;
  appearance: none;
  border: 1px solid #c8c6c4;
  background: #fff url("data:image/svg+xml,%3Csvg xmlns='http://www.w3.org/2000/svg' width='8' height='8'%3E%3Cpath d='M1 2.500 4 5.500 7 2.500' fill='none' stroke='%23222' stroke-width='1.500'/%3E%3C/svg%3E") no-repeat right 2px center;
  color: #222;
}
.face{
  width: 123px;
  margin-right: 2px;
}
.size{
  width: 43px;
  margin-right: 2px;
}
.format{
  width: 140px;
}
.font .tools{
  padding-left: 7px;
}
.alignment .tools{
  padding-left: 7px;
}
.alignment .on.ic{
  width: 22px;
  margin: 0 1px;
}
.txt{
  height: 23px;
  padding: 0 3px;
  gap: 3px;
  border: 1px solid transparent;
}
.txt.on{
  border-color: #8a8886;
}
.number .tools{
  padding-left: 8px;
}
.styles .tools{
  justify-content: flex-end;
  padding-right: 10px;
}
.styles .big{
  width: 74px;
}
.styles .table{
  width: 58px;
}
.styles .cond{
  margin-right: -2px;
}
.gallery{
  height: 62px;
  margin: 2px 0 0 2px;
  display: flex;
  background: #fff;
  border: 1px solid #c8c6c4;
  color: #000;
}
.swatches{
  display: grid;
  grid-template-columns: repeat(4, 100px);
  grid-template-rows: 22px 22px;
  gap: 6px;
  padding: 5px 4px 0 3px;
}
.swatches button{
  justify-content: flex-start;
  padding-left: 4px;
}
.swatches .picked{
  margin: -3px;
  padding-left: 6px;
  border: 1px solid #8a8886;
  box-shadow: inset 0 0 0 2px #cfcdcb;
}
.bad{
  background: #ffc7ce;
  color: #9c0006;
}
.good{
  background: #c6efce;
  color: #006100;
}
.neutral{
  background: #ffeb9c;
  color: #9c5700;
}
.scroller{
  display: grid;
  grid-template-rows: 20px 20px 20px;
}
.scroller button{
  width: 14px;
  border-left: 1px solid #b5b3b1;
  border-bottom: 1px solid #b5b3b1;
  background: #f8f8f8;
}
.cells .tools{
  justify-content: center;
}
.cells .big{
  width: 42px;
}
.editing .tools{
  padding-left: 11px;
}
.editing .stack{
  width: 90px;
  gap: 7px;
  padding-top: 3px;
}
.editing .big{
  width: 44px;
}
.analysis .tools{
  justify-content: center;
}
.collapse{
  margin: auto 9px 0 auto;
}

/* formula bar */
.formulabar{
  height: 47px;
  flex: none;
  padding: 11px 6px 9px 5px;
  display: flex;
}
.namebox, .fxbox, .formula{
  height: 26px;
  display: flex;
  align-items: center;
  background: #fdfdfd;
  border: 1px solid #c6c6c6;
}
.namebox{
  width: 102px;
  padding: 0 6px;
}
.namebox input, .formula input{
  flex: 1;
  min-width: 0;
}
.dots{
  width: 2px;
  height: 11px;
  margin: 8px 14px;
  background: repeating-linear-gradient(#b0b0b0 0 2px, transparent 2px 4px);
}
.fxbox{
  width: 110px;
  justify-content: space-around;
  margin-right: 3px;
}
.fx{
  font: italic 17px/16px "Liberation Serif", serif;
}
.fx sub{
  font-size: 12px;
}
.formula{
  flex: 1;
  padding: 0 4px 0 11px;
}

/* sheet */
.workbook{
  flex: 1;
  min-height: 0;
  display: flex;
}
.sheet{
  position: relative;
  flex: 1;
  border: 1px solid #999;
  overflow: hidden;
}
.lists{
  width: fit-content;
  min-height: 100%;
  padding: 0 6px 0 5px;
  display: flex;
  align-items: flex-start;
  gap: 5px;
  background: #f1f1f1;
}
.lists table{
  border-collapse: collapse;
  table-layout: fixed;
  width: 408px;
  font: 13px/16px "Liberation Sans", Arial, sans-serif;
  text-align: center;
  color: #000;
}
.lists .levels{
  width: 204px;
}
.lists .students{
  width: 434px;
  margin-left: 5px;
}
.fullname{
  width: 230px;
}
caption{
  height: 49px;
  padding: 16px 4px 0 0;
  color: #808080;
  font-size: 14px;
  font-weight: 700;
  text-decoration: underline;
}
th{
  height: 34px;
  padding: 0;
  background: #808080;
  color: #fff;
  font-weight: 400;
}
td{
  height: 38px;
  padding: 0;
  background: #fff;
}
td.a-plus, td.fail{
  color: #fff;
}
td.a-plus{
  background: #50b47f;
}
td.good{
  background: #c6efce;
}
td.neutral{
  background: #ffeb9c;
}
td.bad{
  background: #ffc7ce;
}
td.fail{
  background: #c00000;
}
.freeze{
  position: absolute;
  left: 0;
  right: 0;
  top: 82px;
  height: 3px;
  border: 1px solid #dcdcdc;
  border-width: 1px 0;
  background: #999;
}
.vscroll{
  width: 15px;
  margin: 2px 3px 0 4px;
  display: flex;
  flex-direction: column;
  background: #dadada;
}
.vscroll button, .hscroll button{
  width: 15px;
  height: 15px;
  background: #fff;
  border: 1px solid #ababab;
}
.vscroll i{
  height: 17px;
  background: #fff;
  border: 1px solid #ababab;
  margin-bottom: auto;
}

/* sheet tabs */
.sheettabs{
  height: 28px;
  flex: none;
  display: flex;
  border-bottom: 1px solid #c6c6c6;
  color: #000;
}
.arrows{
  width: 101px;
  display: flex;
  gap: 24px;
  padding-left: 27px;
  border-right: 1px solid #999;
  margin: 2px 0 4px;
}
.sheettabs a{
  height: 22px;
  margin: 2px 1px 0 2px;
  padding: 3px 14px;
  background: #92d0b0;
  box-shadow: 2px 0 0 #e6e6e6, 3px 0 0 #aaa;
}
.sheettabs a + a{
  margin-left: 4px;
}
.sheettabs a.red{
  background: #c00000;
  color: #fff;
}
.sheettabs a.current{
  height: 26px;
  margin: -1px 0 0 1px;
  padding: 0 2px;
  border: 1px solid #999;
  border-width: 0 1px;
  border-bottom: 2px solid #217346;
  background: #fff;
  box-shadow: none;
  color: #217346;
  font-weight: 700;
  z-index: 1;
}
.current span{
  display: block;
  height: 22px;
  padding: 4px 10px 0;
  background: linear-gradient(#fff, #fff0cf);
}
.add{
  margin: 0 auto 0 32px;
}
.hscroll{
  flex: 0 1 744px;
  margin-right: 24px;
  padding-top: 6px;
  display: flex;
}
.hscroll .dots{
  margin: 2px 15px 0 0;
}
.hscroll i{
  flex: 1;
  height: 15px;
  background: #fff;
  border: 1px solid #ababab;
}
.hscroll .right{
  margin-left: 1px;
}

/* status bar */
.status{
  height: 22px;
  flex: none;
  padding: 0 14px 0 7px;
  display: flex;
  align-items: center;
  background: #f3f2f1;
  border-bottom: 1px solid #241838;
  font-size: 11px;
}
.macro{
  margin-left: 20px;
}
.views{
  margin-left: auto;
  display: flex;
  height: 100%;
}
.views button{
  width: 40px;
}
.views .on{
  border: 0;
}
.zoom{
  margin: 0 5px;
}
.status input{
  width: 100px;
  height: 16px;
  appearance: none;
  background: linear-gradient(#aaa, #aaa) center / 100% 1px no-repeat;
}
.status input::-webkit-slider-thumb{
  appearance: none;
  width: 5px;
  height: 11px;
  background: #777;
}
.views + .zoom{
  margin-left: 6px;
}
.percent{
  margin-left: 6px;
}
```
